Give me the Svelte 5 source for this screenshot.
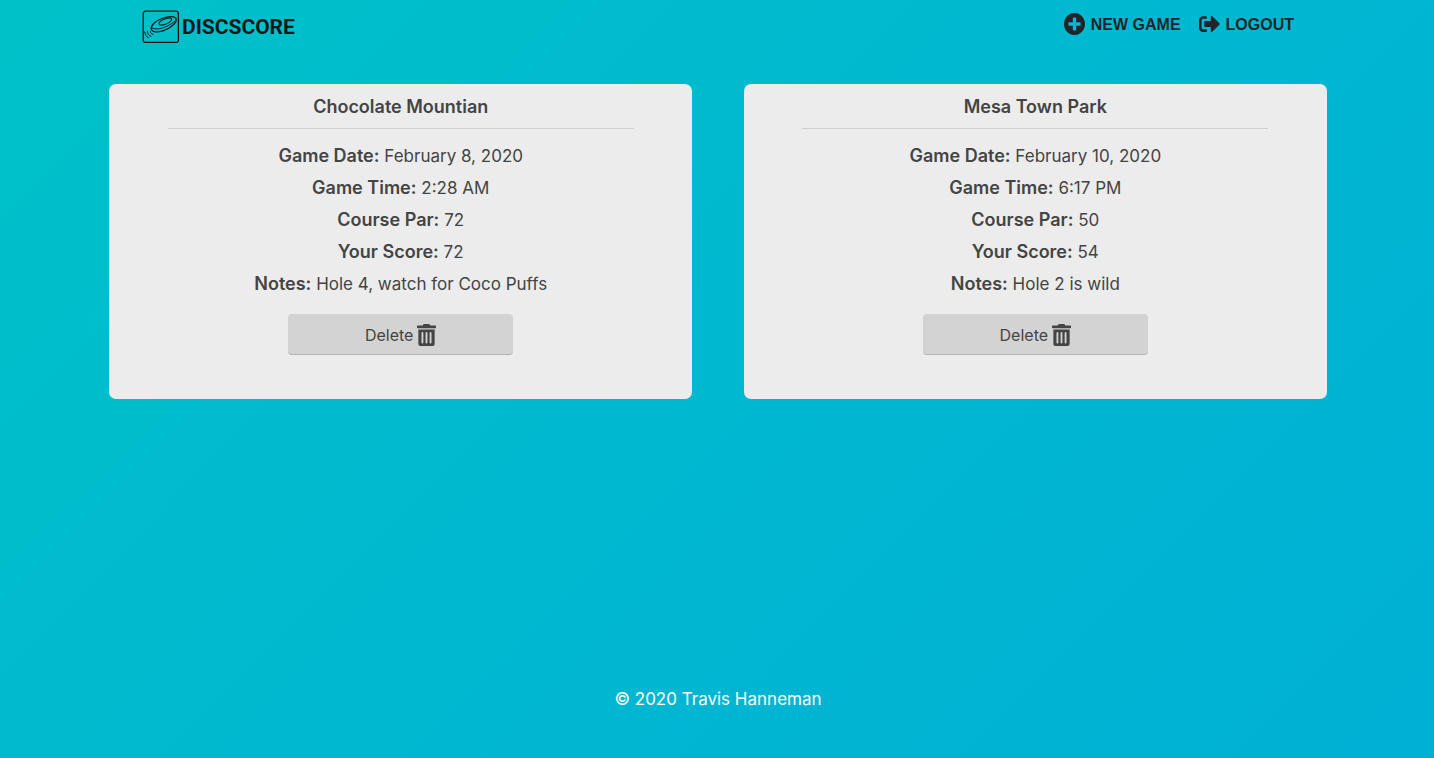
<script>
  const games = [
    {
      course: 'Chocolate Mountian',
      details: [
        ['Game Date', 'February 8, 2020'],
        ['Game Time', '2:28 AM'],
        ['Course Par', '72'],
        ['Your Score', '72'],
        ['Notes', 'Hole 4, watch for Coco Puffs']
      ]
    },
    {
      course: 'Mesa Town Park',
      details: [
        ['Game Date', 'February 10, 2020'],
        ['Game Time', '6:17 PM'],
        ['Course Par', '50'],
        ['Your Score', '54'],
        ['Notes', 'Hole 2 is wild']
      ]
    }
  ];
</script>

<div class="page">
  <header>
    <a class="brand" href="#home">
      <svg width="38" height="34" viewBox="0 0 38 34" fill="none" stroke="#05191b" stroke-linecap="round" stroke-linejoin="round" aria-hidden="true">
        <rect x="1.2" y="1.2" width="35.2" height="31.2" rx="2.5" stroke-width="1.3" />
        <path d="M9.200 19C9 14.500 14.500 10.500 20 8.500C26.500 6 33.800 6 34.200 9.300C34.600 13.500 28 18.500 21 20.800C15.500 22.500 9.800 22.500 9.200 19Z" stroke-width="1.300" />
        <path d="M9.800 17.800C13 20.500 21 18.500 27 15.200C31 13 33.500 11 34 9.500" stroke-width="1" />
        <path d="M17 14C16.800 10.500 28 6 29.500 9C31 12.300 17.800 17.500 17 14Z" stroke-width="1.100" />
        <path d="M8.300 21.500C8.500 23 9.500 24 11 24.400M5.300 21.500C5.500 24 7 25.800 9 26.300M2.800 22C3 24.800 4.300 26.900 6.300 27.600" stroke-width="1" />
      </svg>
      <span>DISCSCORE</span>
    </a>
    <nav>
      <a href="#new">
        <svg width="21" height="22" viewBox="8 8 496 496" fill="currentColor" preserveAspectRatio="none" aria-hidden="true">
          <path d="M256 8C119 8 8 119 8 256s111 248 248 248 248-111 248-248S393 8 256 8zm144 276c0 6.600-5.400 12-12 12h-92v92c0 6.600-5.400 12-12 12h-56c-6.600 0-12-5.400-12-12v-92h-92c-6.600 0-12-5.400-12-12v-56c0-6.600 5.400-12 12-12h92v-92c0-6.600 5.400-12 12-12h56c6.600 0 12 5.400 12 12v92h92c6.600 0 12 5.400 12 12v56z" />
        </svg>
        NEW GAME
      </a>
      <a href="#logout">
        <svg width="21" height="22" viewBox="0 0 512 512" fill="currentColor" aria-hidden="true">
          <path d="M497 273L329 441c-15 15-41 4.500-41-17v-96H152c-13.300 0-24-10.700-24-24v-96c0-13.300 10.700-24 24-24h136V88c0-21.400 25.900-32 41-17l168 168c9.300 9.400 9.300 24.600 0 34zM192 436v-40c0-6.600-5.400-12-12-12H96c-17.700 0-32-14.300-32-32V160c0-17.700 14.300-32 32-32h84c6.600 0 12-5.400 12-12V76c0-6.600-5.400-12-12-12H96c-53 0-96 43-96 96v192c0 53 43 96 96 96h84c6.600 0 12-5.400 12-12z" />
        </svg>
        LOGOUT
      </a>
    </nav>
  </header>

  <main>
    {#each games as game}
      <article>
        <h2>{game.course}</h2>
        <hr />
        {#each game.details as [label, value]}
          <p><strong>{label}:</strong> {value}</p>
        {/each}
        <button type="button">
          Delete
          <svg width="19" height="22" viewBox="0 0 448 512" fill="currentColor" preserveAspectRatio="none" aria-hidden="true">
            <path d="M32 464a48 48 0 0 0 48 48h288a48 48 0 0 0 48-48V128H32zm266-256a22 22 0 0 1 44 0v224a22 22 0 0 1-44 0zm-96 0a22 22 0 0 1 44 0v224a22 22 0 0 1-44 0zm-96 0a22 22 0 0 1 44 0v224a22 22 0 0 1-44 0zM432 32H312l-9.400-18.700A24 24 0 0 0 281.100 0H166.800a23.700 23.700 0 0 0-21.400 13.300L136 32H16A16 16 0 0 0 0 48v32a16 16 0 0 0 16 16h416a16 16 0 0 0 16-16V48a16 16 0 0 0-16-16z" />
          </svg>
        </button>
      </article>
    {/each}
  </main>

  <footer>© 2020 Travis Hanneman</footer>
</div>

<style>
  .page {
    box-sizing: border-box;
    min-height: 100vh;
    display: flex;
    flex-direction: column;
    padding-left: 2px;
    font-family: Inter, sans-serif;
    font-size: 17px;
    color: #444;
    background: linear-gradient(135deg, #00c1c8, #00b8d0 50%, #00b0d5);
  }

  header {
    display: flex;
    align-items: flex-start;
    justify-content: space-between;
    padding: 10px 140px 0;
    height: 75px;
    box-sizing: border-box;
  }

  a {
    color: #212529;
    text-decoration: none;
  }

  .brand {
    display: flex;
    align-items: center;
    gap: 2px;
    color: #05191b;
    font: bold 21px/34px Roboto, sans-serif;
  }

  nav {
    display: flex;
    gap: 18px;
    padding-top: 3px;
    font: bold 16px/24px "Liberation Sans", sans-serif;
  }

  nav a {
    display: flex;
    align-items: flex-start;
    gap: 6px;
  }

  main {
    display: grid;
    grid-template-columns: 1fr 1fr;
    gap: 52px;
    width: 85%;
    margin: 9px auto 0;
  }

  article {
    display: flex;
    flex-direction: column;
    align-items: center;
    padding: 7px 0 44px;
    border-radius: 7px;
    background: #ececec;
    text-align: center;
  }

  h2 {
    margin: 0;
    font-size: 18px;
    font-weight: 600;
    line-height: 32px;
  }

  hr {
    width: 80%;
    margin: 5px 0 11px;
    border: 0;
    border-top: 1px solid #d0d0d0;
  }

  p {
    margin: 0;
    line-height: 32px;
  }

  strong {
    font-size: 18px;
    font-weight: 600;
  }

  button {
    display: flex;
    align-items: center;
    justify-content: center;
    gap: 4px;
    width: 225px;
    height: 41px;
    margin-top: 14px;
    padding: 1px 0 0;
    border: 0;
    border-bottom: 1px solid #b5b5b5;
    border-radius: 4px;
    background: #d3d3d3;
    color: #444;
    font: 16px Inter, sans-serif;
    cursor: pointer;
  }

  footer {
    margin-top: auto;
    padding-bottom: 43px;
    line-height: 32px;
    text-align: center;
    color: #fff;
  }
</style>
